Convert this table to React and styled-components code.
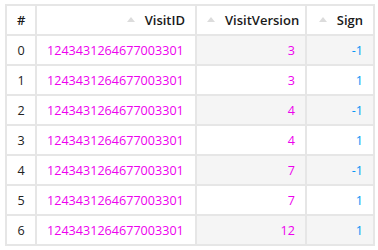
import React from "react";
import styled, { createGlobalStyle } from "styled-components";

const GlobalStyle = createGlobalStyle`
  body {
    margin: 0;
    background: #fff;
    font-family: "Open Sans", "Noto Sans", sans-serif;
  }
`;

const Wrap = styled.div`
  padding: 4px 5px;
`;

const Table = styled.table`
  border-collapse: collapse;
  table-layout: fixed;
  width: 368px;
  border: 2px solid #e6e6e6;
`;

const HeadCell = styled.th`
  height: 28px;
  padding: 0 10px;
  border: 2px solid #e6e6e6;
  font-size: 13px;
  font-weight: 600;
  color: #1a1a1a;
  text-align: ${(p) => (p.center ? "center" : "right")};
  white-space: nowrap;
`;

const SortArrow = styled.span`
  display: inline-block;
  width: 0;
  height: 0;
  border-left: 4px solid transparent;
  border-right: 4px solid transparent;
  border-bottom: 5px solid #dcdcdc;
  margin-right: 10px;
  vertical-align: 3px;
`;

const Cell = styled.td`
  height: 28px;
  padding: 0 10px;
  border: 2px solid #e6e6e6;
  font-size: 12.6px;
  white-space: nowrap;
  text-align: ${(p) => p.align || "right"};
  color: ${(p) => p.color || "#222"};
  background: ${(p) => (p.shaded ? "#f5f5f5" : "#fff")};
`;

const rows = [
  [3, -1],
  [3, 1],
  [4, -1],
  [4, 1],
  [7, -1],
  [7, 1],
  [12, 1],
];

const MAGENTA = "#ee00ee";
const BLUE = "#0a96f5";

export default function App() {
  return (
    <Wrap>
      <GlobalStyle />
      <Table>
        <colgroup>
          <col style={{ width: 30 }} />
          <col style={{ width: 160 }} />
          <col style={{ width: 110 }} />
          <col style={{ width: 68 }} />
        </colgroup>
        <thead>
          <tr>
            <HeadCell center>#</HeadCell>
            <HeadCell>
              <SortArrow />
              VisitID
            </HeadCell>
            <HeadCell>
              <SortArrow />
              VisitVersion
            </HeadCell>
            <HeadCell>
              <SortArrow />
              Sign
            </HeadCell>
          </tr>
        </thead>
        <tbody>
          {rows.map(([version, sign], i) => {
            const shaded = i % 2 === 0;
            return (
              <tr key={i}>
                <Cell align="center">{i}</Cell>
                <Cell align="left" color={MAGENTA}>
                  1243431264677003301
                </Cell>
                <Cell color={MAGENTA} shaded={shaded}>
                  {version}
                </Cell>
                <Cell color={BLUE} shaded={shaded}>
                  {sign}
                </Cell>
              </tr>
            );
          })}
        </tbody>
      </Table>
    </Wrap>
  );
}
